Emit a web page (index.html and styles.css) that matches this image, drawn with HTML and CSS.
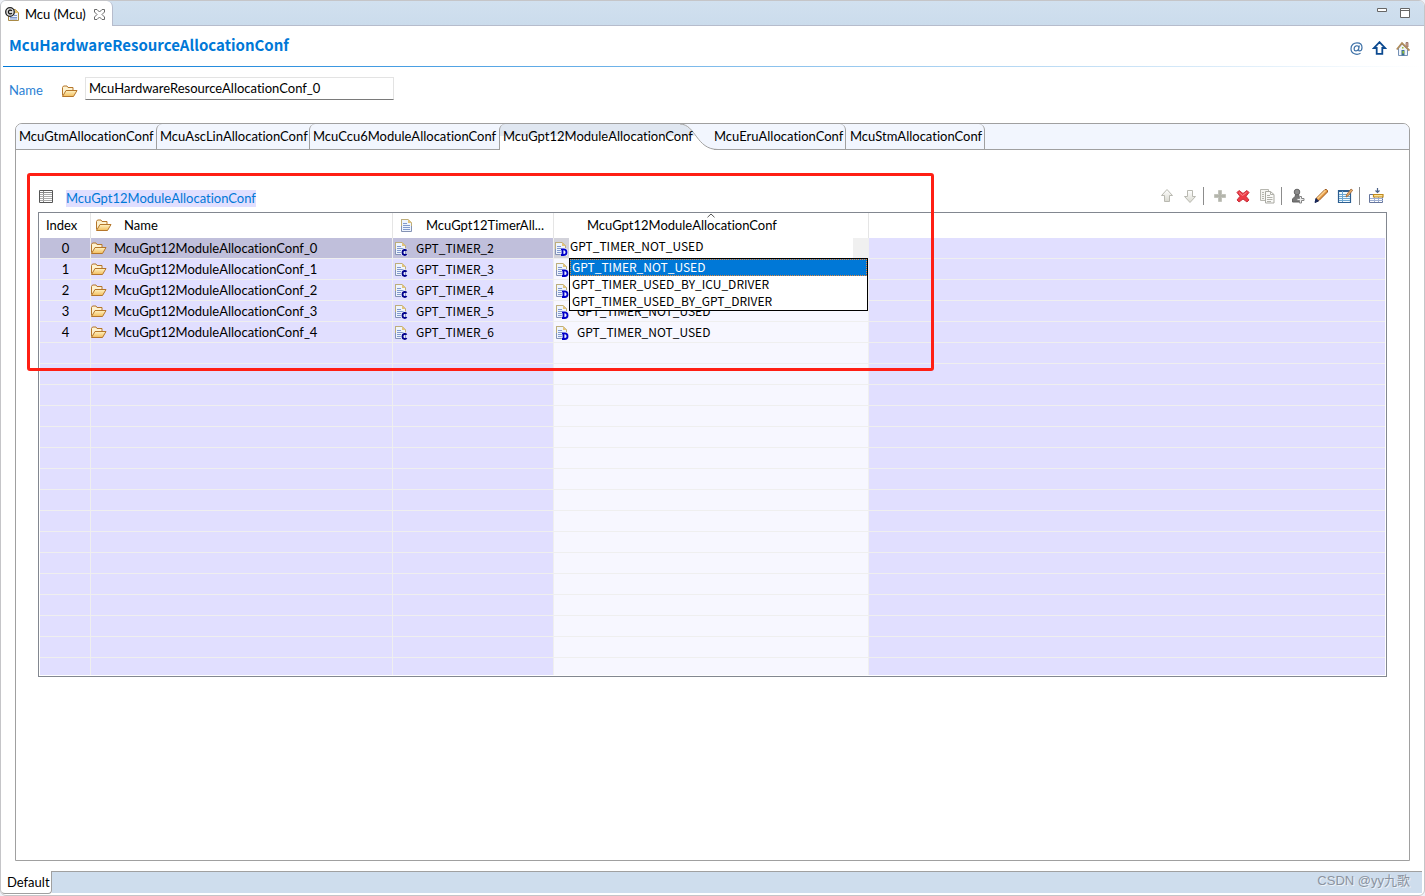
FILE: index.html
```
<!DOCTYPE html>
<html lang="en">
<head>
<meta charset="utf-8">
<title>Mcu (Mcu)</title>
<link rel="stylesheet" href="styles.css">
</head>
<body>
<svg class="defs" aria-hidden="true">
  <defs>
    <linearGradient id="gold" x1="0" y1="0" x2="0" y2="1"><stop offset="0" stop-color="#fff3c4"/><stop offset="1" stop-color="#f2bd5c"/></linearGradient>
    <linearGradient id="pale" x1="0" y1="0" x2="0" y2="1"><stop offset="0" stop-color="#fff"/><stop offset="1" stop-color="#d9d9d0"/></linearGradient>
  </defs>
  <symbol id="folder" viewBox="0 0 16 14">
    <path d="M.5 11.500V3.500l1-1.500H5l1 1.500h5V6" fill="#fdf2d0" stroke="#b5762a"/>
    <path d="M.5 12.500L4 6.500h11L11.500 12.500z" fill="url(#gold)" stroke="#b5762a"/>
  </symbol>
  <symbol id="page" viewBox="0 0 13 15">
    <path d="M1.500 1.500h6.500l3.500 3.500v8.500h-10z" fill="#eef4fd" stroke="#8492b4"/>
    <path d="M1.500 8V1.500h6.500l3.500 3.500v3" fill="none" stroke="#bfae79"/>
    <path d="M8 1v4h4z" fill="#e2c37a"/>
    <path d="M3 5.500h4M3 7.500h7M3 9.500h7M3 11.500h7" stroke="#8199cc"/>
  </symbol>
  <symbol id="page-c" viewBox="0 0 14 15">
    <use href="#page" width="13" height="15"/>
    <path d="M12.500 9.800c-.8-1.200-4-1.400-4 1.700s3.200 2.900 4 1.500" fill="none" stroke="#e4e6fb" stroke-width="3.500"/>
    <path d="M12.500 9.800c-.8-1.200-4-1.400-4 1.700s3.200 2.900 4 1.500" fill="none" stroke="#00008b" stroke-width="1.900"/>
  </symbol>
  <symbol id="page-d" viewBox="0 0 14 15">
    <use href="#page" width="13" height="15"/>
    <path d="M7 8.500h2.500c4 0 4 5.500 0 5.500H7M8.500 8.500V14" fill="none" stroke="#e9ecfc" stroke-width="3.500"/>
    <path d="M7 8.300h2.500c4 0 4 5.700 0 5.700H7M8.500 8.500V14" fill="none" stroke="#0000c8" stroke-width="1.800"/>
  </symbol>
</svg>

<div class="editor">
  <header class="editor-tabs">
    <div class="editor-tab">
      <svg class="tab-icon" width="15" height="15" viewBox="0 0 15 15">
        <path d="M3.500 2.500h7l3 3v8h-10z" fill="#eef3fc" stroke="#a98a45"/>
        <path d="M10 2v4h4z" fill="#e2bf6c"/>
        <path d="M5 10.500h7M5 12h7M9 8.500h3" stroke="#7e98cf"/>
        <circle cx="5" cy="5" r="4.300" fill="#ddd" stroke="#222" stroke-width="1.300"/>
        <path d="M6.800 3.800c-1-1.300-3.400-.8-3.400 1.200s2.400 2.500 3.400 1.200" fill="none" stroke="#111" stroke-width="1.300"/>
      </svg>
      <span>Mcu (Mcu)</span>
      <button class="icon-button" aria-label="Close">
        <svg width="11" height="11" viewBox="0 0 11 11"><path d="M.5.5h2.500L5.500 3 8 .5h2.500V3L8 5.500 10.500 8v2.500H8L5.500 8 3 10.500H.5V8L3 5.500.5 3z" fill="#fff" stroke="#6b6b6b"/></svg>
      </button>
    </div>
    <div class="window-buttons">
      <button class="icon-button" aria-label="Minimize"><svg width="10" height="10" viewBox="0 0 10 10"><path d="M.5.500h9v3h-9z" fill="#fff" stroke="#666"/></svg></button>
      <button class="icon-button" aria-label="Maximize"><svg width="10" height="10" viewBox="0 0 10 10"><path d="M.5.500h9v9h-9zM1 2.500h8" fill="#fff" stroke="#666"/></svg></button>
    </div>
  </header>

  <div class="form-head">
    <h1>McuHardwareResourceAllocationConf</h1>
    <div class="head-tools">
      <button class="icon-button" aria-label="Annotations"><svg width="13" height="13" viewBox="0 0 13 13"><g fill="none" stroke="#3f72a8" stroke-width="1.200"><path d="M10.500 11.300C7 13.500 1 12 1 6.700 1 2.500 4 .8 7 .8c3 0 5 2 5 4.700 0 2-1.300 3.400-2.500 3.400C8 8.900 8.600 7.500 9.300 3.500"/><path d="M8.800 5.500C8.500 3 4.200 3 4.100 6.900c0 2.600 3.300 2.700 4.500 0"/></g></svg></button>
      <button class="icon-button" aria-label="Up"><svg width="15" height="14" viewBox="0 0 15 14"><path d="M7.500 1.200L13 7h-2.700v5.800H4.700V7H2z" fill="#fff" stroke="#0c4a90" stroke-width="1.800"/></svg></button>
      <button class="icon-button" aria-label="Home"><svg width="14" height="15" viewBox="0 0 14 15"><path d="M10 1.500h2V6h-2z" fill="#d8a898" stroke="#8a6a5a" stroke-width=".8"/><path d="M2.500 7L6 3l5.500 5v6.500h-9z" fill="#eef3fa" stroke="#7590b5"/><path d="M.8 8.500L6 2l7.500 7.500" fill="none" stroke="#b08c5c" stroke-width="1.800"/><path d="M5.500 9h3v5.500h-3z" fill="#3c6f92"/><path d="M6 6h1.500v1.500H6zM6.500 10h1.500v2.500H6.500z" fill="#9ac531"/></svg></button>
    </div>
  </div>

  <div class="name-row">
    <label for="conf-name">Name</label>
    <svg width="16" height="14"><use href="#folder"/></svg>
    <input id="conf-name" type="text" value="McuHardwareResourceAllocationConf_0">
  </div>

  <section class="folder">
    <nav class="tabs" role="tablist">
      <button class="tab first" role="tab">McuGtmAllocationConf</button>
      <button class="tab asc" role="tab">McuAscLinAllocationConf</button>
      <button class="tab ccu" role="tab">McuCcu6ModuleAllocationConf</button>
      <button class="tab active" role="tab" aria-selected="true"><span>McuGpt12ModuleAllocationConf</span>
        <svg class="curve" width="38" height="26" viewBox="0 0 38 26">
          <path d="M0 0H38V25.500C16 25.500 18 .500 0 .500z" fill="#f2f6fe"/>
          <path d="M0 .500C18 .500 16 25.500 38 25.500V26H0z" fill="#fff"/>
          <path d="M0 .500C6 .500 10 4 15 12H0z" fill="#e0e7f1"/>
          <path d="M0 0C16 .500 16 25.500 38 25.500" fill="none" stroke="#a0a0a0"/>
        </svg>
      </button>
      <button class="tab right eru" role="tab">McuEruAllocationConf</button>
      <button class="tab right stm" role="tab">McuStmAllocationConf</button>
      <div class="tabs-rest"></div>
    </nav>

    <div class="folder-body">
      <div class="table-bar">
        <svg width="14" height="13" viewBox="0 0 14 13"><path d="M.5.500h13v12H.5z" fill="#fff" stroke="#555"/><path d="M1 2.500h12M4.500 1v11" stroke="#888"/><path d="M1 4.500h12M1 6.500h12M1 8.500h12M1 10.500h12" stroke="#aaa"/></svg>
        <h2>McuGpt12ModuleAllocationConf</h2>
        <div class="toolbar">
          <button class="icon-button" aria-label="Move up"><svg width="14" height="16" viewBox="0 0 14 16"><path d="M7 1.500l5.500 6h-3v6h-5v-6h-3z" fill="url(#pale)" stroke="#b9b9b1"/></svg></button>
          <button class="icon-button" aria-label="Move down"><svg width="14" height="16" viewBox="0 0 14 16"><path d="M7 14.500l5.500-6h-3v-6h-5v6h-3z" fill="url(#pale)" stroke="#b9b9b1"/></svg></button>
          <span class="rule"></span>
          <button class="icon-button" aria-label="Add"><svg width="14" height="16" viewBox="0 0 14 16"><path d="M5.500 2.500h3v4h4v3h-4v4h-3v-4h-4v-3h4z" fill="#b4b5ac" stroke="#c3c4bc"/></svg></button>
          <button class="icon-button" aria-label="Delete"><svg width="14" height="16" viewBox="0 0 14 16"><path d="M3 2.500l4 3 4-3 2 2-3 3.800 3 3.700-2 2-4-3-4 3-2-2 3-3.700-3-3.800z" fill="#ee3a45" stroke="#c8323c"/><path d="M3 4.500l3.500 3 4-3" fill="none" stroke="#f98b8f"/></svg></button>
          <button class="icon-button" aria-label="Duplicate"><svg width="16" height="16" viewBox="0 0 16 16"><path d="M1.500 1.500h8v11h-8z" fill="#f5f5f2" stroke="#b7b7b0"/><path d="M3 4.500h2M3 6.500h2M3 8.500h2M3 10.500h2" stroke="#b7b7b0"/><path d="M6.500 3.500h5l3.500 3v8.500H6.500z" fill="#fafaf8" stroke="#aaaaa3"/><path d="M11.500 3.500v3H15M8 7.500h3M8 9.500h5.500M8 11.500h5.500M8 13.500h4" fill="none" stroke="#b2b2ab"/></svg></button>
          <span class="rule"></span>
          <button class="icon-button" aria-label="Add user"><svg width="14" height="16" viewBox="0 0 14 16"><path d="M5 5.500L4 8.500l-2.500 2.500V14h8v-3L8 8.500 7.500 5.500z" fill="#777" stroke="#636363"/><circle cx="6" cy="4" r="2.800" fill="#8c8c8c" stroke="#666"/><path d="M8.500 8.500h2v2H13v2h-2.500v2.500h-2v-2.500H6v-2h2.500z" fill="#eee" stroke="#858585"/></svg></button>
          <button class="icon-button" aria-label="Edit"><svg width="14" height="16" viewBox="0 0 14 16"><path d="M1.500 14l1-4L11 1.500h1.500l1 1V4L5 12.500z" fill="#e79a43" stroke="#9b5a22"/><path d="M3.500 10.500l8-8" stroke="#fbd394" stroke-width="1.400"/><path d="M1 14.500l1-4L4.500 13z" fill="#16285c" stroke="#16285c"/></svg></button>
          <button class="icon-button" aria-label="Edit table"><svg width="16" height="16" viewBox="0 0 16 16"><path d="M1.500 2.500h12v12h-12z" fill="#f2fbff" stroke="#2d5e90" stroke-width="1.200"/><path d="M1 3h13" stroke="#2d5e90" stroke-width="2"/><path d="M2 6.500h11M2 8.500h11M2 10.500h11M2 12.500h11" stroke="#6da7d2"/><path d="M5.500 3v11" stroke="#6da7d2"/><path d="M9 9l.7-2.500L14 1l1.700 1.300-4.500 5.500z" fill="#e7ad6c" stroke="#9e6533" stroke-width=".8"/></svg></button>
          <span class="rule"></span>
          <button class="icon-button" aria-label="Insert column"><svg width="15" height="16" viewBox="0 0 15 16"><path d="M.5 6.500h13v8H.5z" fill="#fff" stroke="#65759c"/><path d="M1 10.500h13M1 12.500h13M5.500 9v5M9.500 9v5" stroke="#9fb0d3"/><path d="M4.500 6.500h9.500v2.500H4.500z" fill="#ffe49a" stroke="#c08a1d" stroke-width="1.200"/><path d="M8.500 0v4M6.500 2.500l2 2 2-2" fill="none" stroke="#4c6288" stroke-width="1.200"/></svg></button>
        </div>
      </div>

      <div class="table-frame">
        <table>
          <colgroup><col class="c-index"><col class="c-name"><col class="c-timer"><col class="c-module"><col></colgroup>
          <thead>
            <tr>
              <th class="index">Index</th>
              <th><div class="head-cell"><svg width="16" height="14"><use href="#folder"/></svg><span>Name</span></div></th>
              <th><div class="head-cell timer"><svg width="13" height="15"><use href="#page"/></svg><span>McuGpt12TimerAll...</span></div></th>
              <th class="sorted">McuGpt12ModuleAllocationConf<svg class="sort" width="8" height="5" viewBox="0 0 8 5"><path d="M.5 4.300L4 1l3.500 3.300" fill="none" stroke="#555"/></svg></th>
              <th class="last"></th>
            </tr>
          </thead>
          <tbody>
            <tr class="selected"><td class="index">0</td><td><div class="cell"><svg width="16" height="14"><use href="#folder"/></svg>McuGpt12ModuleAllocationConf_0</div></td><td><div class="cell value"><svg width="14" height="15"><use href="#page-c"/></svg>GPT_TIMER_2</div></td><td class="module"><div class="combo"><svg width="14" height="15"><use href="#page-d"/></svg>
              <select aria-label="McuGpt12ModuleAllocationConf 0"><option>GPT_TIMER_NOT_USED</option><option>GPT_TIMER_USED_BY_ICU_DRIVER</option><option>GPT_TIMER_USED_BY_GPT_DRIVER</option></select>
              <ul class="options" role="listbox" aria-label="Values"><li class="current" role="option" aria-selected="true">GPT_TIMER_NOT_USED</li><li role="option">GPT_TIMER_USED_BY_ICU_DRIVER</li><li role="option">GPT_TIMER_USED_BY_GPT_DRIVER</li></ul></div></td><td></td></tr>
            <tr><td class="index">1</td><td><div class="cell"><svg width="16" height="14"><use href="#folder"/></svg>McuGpt12ModuleAllocationConf_1</div></td><td><div class="cell value"><svg width="14" height="15"><use href="#page-c"/></svg>GPT_TIMER_3</div></td><td class="module"><div class="cell value"><svg width="14" height="15"><use href="#page-d"/></svg></div></td><td></td></tr>
            <tr><td class="index">2</td><td><div class="cell"><svg width="16" height="14"><use href="#folder"/></svg>McuGpt12ModuleAllocationConf_2</div></td><td><div class="cell value"><svg width="14" height="15"><use href="#page-c"/></svg>GPT_TIMER_4</div></td><td class="module"><div class="cell value"><svg width="14" height="15"><use href="#page-d"/></svg></div></td><td></td></tr>
            <tr><td class="index">3</td><td><div class="cell"><svg width="16" height="14"><use href="#folder"/></svg>McuGpt12ModuleAllocationConf_3</div></td><td><div class="cell value"><svg width="14" height="15"><use href="#page-c"/></svg>GPT_TIMER_5</div></td><td class="module"><div class="cell value"><svg width="14" height="15"><use href="#page-d"/></svg>GPT_TIMER_NOT_USED</div></td><td></td></tr>
            <tr><td class="index">4</td><td><div class="cell"><svg width="16" height="14"><use href="#folder"/></svg>McuGpt12ModuleAllocationConf_4</div></td><td><div class="cell value"><svg width="14" height="15"><use href="#page-c"/></svg>GPT_TIMER_6</div></td><td class="module"><div class="cell value"><svg width="14" height="15"><use href="#page-d"/></svg>GPT_TIMER_NOT_USED</div></td><td></td></tr>
            <tr><td></td><td></td><td></td><td class="module"></td><td></td></tr>
            <tr><td></td><td></td><td></td><td class="module"></td><td></td></tr>
            <tr><td></td><td></td><td></td><td class="module"></td><td></td></tr>
            <tr><td></td><td></td><td></td><td class="module"></td><td></td></tr>
            <tr><td></td><td></td><td></td><td class="module"></td><td></td></tr>
            <tr><td></td><td></td><td></td><td class="module"></td><td></td></tr>
            <tr><td></td><td></td><td></td><td class="module"></td><td></td></tr>
            <tr><td></td><td></td><td></td><td class="module"></td><td></td></tr>
            <tr><td></td><td></td><td></td><td class="module"></td><td></td></tr>
            <tr><td></td><td></td><td></td><td class="module"></td><td></td></tr>
            <tr><td></td><td></td><td></td><td class="module"></td><td></td></tr>
            <tr><td></td><td></td><td></td><td class="module"></td><td></td></tr>
            <tr><td></td><td></td><td></td><td class="module"></td><td></td></tr>
            <tr><td></td><td></td><td></td><td class="module"></td><td></td></tr>
            <tr><td></td><td></td><td></td><td class="module"></td><td></td></tr>
            <tr class="cut"><td></td><td></td><td></td><td class="module"></td><td></td></tr>
          </tbody>
        </table>
      </div>
      <div class="marker"></div>
    </div>
  </section>

  <footer class="page-tabs">
    <button class="page-tab">Default</button>
    <div class="page-rest"><span class="credit">CSDN @yy九歌</span></div>
  </footer>
</div>
</body>
</html>
```
FILE: styles.css
```
:root {
  --line: #a0a0a0;
  --lavender: #e1dfff;
  --blue: #0078d7;
  --value-font: "Noto Sans CJK SC", "Noto Sans", sans-serif;
}
* { box-sizing: border-box; }
body {
  margin: 0;
  background: #eef1f8;
  color: #000;
  font: 13px/16px Lato, "Noto Sans", "Noto Sans CJK SC", sans-serif;
  font-variant-ligatures: none;
}
button, input, select { font: inherit; color: inherit; font-variant-ligatures: none; }
button { margin: 0; padding: 0; border: 0; background: none; text-align: left; white-space: nowrap; }
svg { display: block; flex: none; }
.defs { position: absolute; width: 0; height: 0; }
.icon-button { display: flex; align-items: center; justify-content: center; }

.editor {
  display: flex;
  flex-direction: column;
  min-height: 100vh;
  border: 1px solid #c5c5c8;
  border-radius: 6px;
  background: #fff;
  overflow: hidden;
}
.editor-tabs {
  display: flex;
  justify-content: space-between;
  height: 25px;
  background: linear-gradient(#d1e0ef, #cbdcec);
  border-bottom: 1px solid #b6bccc;
}
.editor-tab {
  display: flex;
  align-items: center;
  gap: 5px;
  height: 25px;
  padding: 1px 7px 0 4px;
  border-right: 1px solid #b6bccc;
  border-top-right-radius: 6px;
  background: #fff;
}
.editor-tab .icon-button { margin-left: 3px; }
.window-buttons { display: flex; align-items: center; gap: 13px; padding-right: 14px; }
.window-buttons .icon-button { height: 10px; align-items: flex-start; }

.form-head {
  display: flex;
  align-items: center;
  justify-content: space-between;
  height: 41px;
  margin: 0 3px 0 2px;
  padding: 0 11px 0 6px;
  border-bottom: 1px solid;
  border-image: linear-gradient(90deg, #0078d7, #fff) 1;
}
h1 { margin: 0; padding-bottom: 2px; font: bold 15px/20px "Noto Sans CJK SC", "Noto Sans", sans-serif; color: var(--blue); }
.head-tools { display: flex; align-items: center; gap: 9px; padding-top: 4px; }

.name-row { display: flex; align-items: center; padding: 10px 8px 0; color: #2b7fd4; }
.name-row label { width: 53px; padding-top: 3px; }
.name-row svg { margin: 4px 7px 0 0; }
.name-row input {
  width: 309px;
  height: 23px;
  padding: 0 3px 1px;
  border: 1px solid #e3e3e3;
  border-bottom-color: #7a7a7a;
  outline: 0;
  background: #fff;
  color: #000;
}

.folder {
  display: flex;
  flex: 1;
  flex-direction: column;
  margin: 23px 14px 10px;
  border: 1px solid var(--line);
  border-radius: 7px 7px 0 0;
}
.tabs { display: flex; height: 26px; background: #f2f6fe; border-radius: 6px 6px 0 0; }
.tab {
  height: 26px;
  padding: 0 3px 1px;
  border-bottom: 1px solid var(--line);
  border-left: 1px solid var(--line);
  border-top-left-radius: 6px;
}
.tab.first { width: 140px; border-left: 0; }
.tab.asc { width: 153px; }
.tab.ccu { width: 190px; }
.tab.active {
  position: relative;
  width: 215px;
  padding-bottom: 2px;
  border-bottom: 0;
  background: linear-gradient(#e0e7f1 12px, #fff 12px) no-repeat 0 0 / 180px 100%;
}
.tab.active span { position: relative; z-index: 2; }
.curve { position: absolute; right: -4px; top: 0; z-index: 1; }
.tab.right {
  position: relative;
  z-index: 2;
  border-left: 0;
  border-right: 1px solid var(--line);
  border-radius: 0 6px 0 0;
}
.tab.eru { width: 132px; padding-left: 0; }
.tab.stm { width: 139px; padding-left: 4px; }
.tabs-rest { flex: 1; border-bottom: 1px solid var(--line); }

.folder-body { position: relative; flex: 1; padding: 35px 22px 0; }
.table-bar { display: flex; align-items: center; height: 27px; padding: 0 3px 5px 1px; }
h2 { margin: 4px 0 0 13px; font-size: 13px; line-height: 17px; font-weight: normal; color: var(--blue); background: var(--lavender); }
.toolbar { display: flex; align-items: center; gap: 9px; margin-left: auto; }
.rule { width: 1px; height: 18px; margin-left: -3px; background: #8c8c8c; }

.table-frame { padding: 0 1px 1px; border: 1px solid #828790; background: #fff; }
table { width: 100%; table-layout: fixed; border-collapse: separate; border-spacing: 0; }
.c-index { width: 51px; }
.c-name { width: 302px; }
.c-timer { width: 161px; }
.c-module { width: 315px; }
th { position: relative; height: 25px; padding: 0 0 1px; border-right: 1px solid #e5e5e5; font-weight: normal; text-align: left; }
th.last { border-right: 0; }
th.index { padding-left: 6px; }
th.sorted { padding-left: 33px; }
.sort { position: absolute; top: 0; left: 50%; margin-left: -4px; }
.head-cell { display: flex; align-items: center; gap: 12px; padding-left: 5px; }
.head-cell.timer { gap: 13px; padding-left: 7px; }
td { height: 21px; padding: 0; border-right: 1px solid #efefef; border-bottom: 1px solid #efefef; background: var(--lavender); }
td:last-child { border-right: 0; }
td.index { padding-left: 1px; text-align: center; }
td.module { background: #f7f7ff; }
.selected td:nth-child(-n+3) { background: #c0bfdb; }
.cut td { height: 17px; border-bottom: 0; }
.cell { display: flex; align-items: center; gap: 7px; height: 20px; }
.cell.value { gap: 8px; padding-left: 1px; font-family: var(--value-font); font-size: 12px; }
.combo { position: relative; display: flex; align-items: center; gap: 1px; height: 20px; background: #d2d2da; font-family: var(--value-font); font-size: 12px; }
.combo select {
  appearance: none;
  flex: 1;
  height: 20px;
  padding: 0 0 4px 1px;
  border: 0;
  outline: 0;
  border-right: 15px solid #f0f0f0;
  border-radius: 0;
  background: #fff;
}
.options {
  position: absolute;
  left: 15px;
  right: 0;
  top: 20px;
  z-index: 3;
  margin: 0;
  padding: 0;
  list-style: none;
  border: 1px solid #000;
  background: #fff;
}
.options li { height: 17px; padding: 0 2px; line-height: 15px; }
.options .current { background: var(--blue); color: #fff; outline: 1px dotted #e88a3c; outline-offset: -1px; }

.marker {
  position: absolute;
  left: 11px;
  top: 23px;
  width: 907px;
  height: 198px;
  border: 3px solid #ff1f14;
  border-radius: 3px;
  pointer-events: none;
}

.page-tabs { display: flex; height: 23px; margin-bottom: 1px; padding-right: 2px; }
.page-tab { width: 51px; padding: 0 0 1px 6px; border-right: 1px solid var(--line); border-bottom: 1px solid var(--line); border-radius: 0 0 4px 4px; }
.page-rest { flex: 1; height: 22px; border-top: 1px solid var(--line); background: #cedded; text-align: right; }
.credit {
  padding-right: 12px;
  color: #8b93a0;
  font: 13px/16px "Liberation Sans", "Noto Sans CJK SC", sans-serif;
  text-shadow: 1px 1px 0 #eef3f8;
}
```
